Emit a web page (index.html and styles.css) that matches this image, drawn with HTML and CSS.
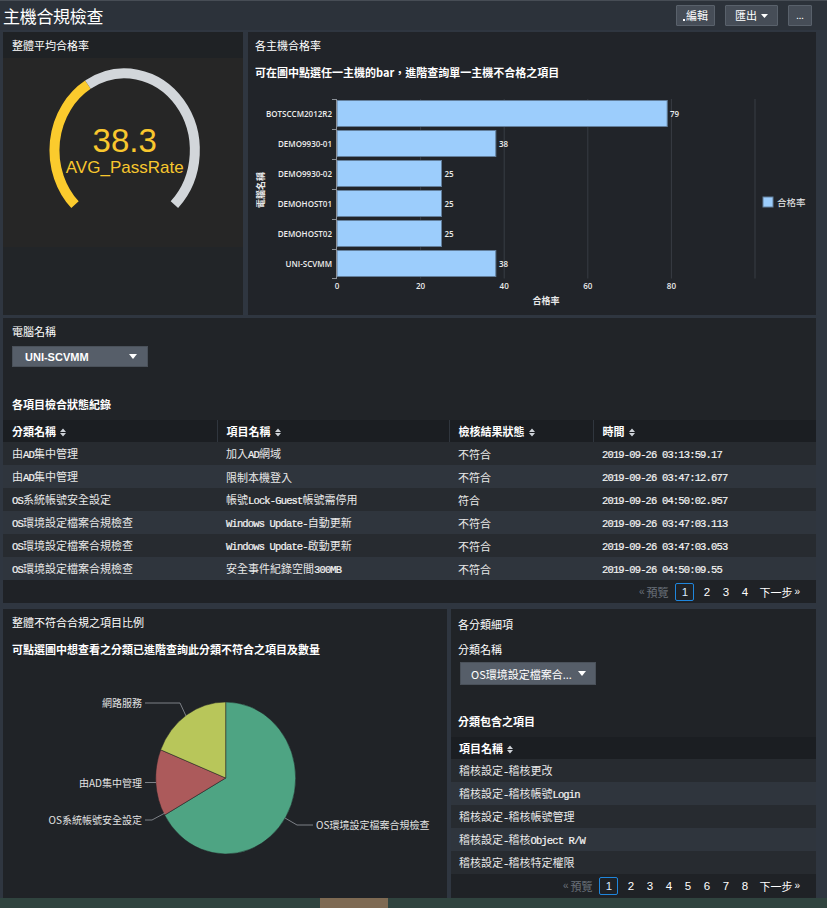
FILE: index.html
```html
<!DOCTYPE html>
<html lang="zh-Hant">
<head>
<meta charset="utf-8">
<title>主機合規檢查</title>
<link rel="stylesheet" href="styles.css">
</head>
<body>
<header class="topbar">
  <h1 class="page-title">主機合規檢查</h1>
  <div class="actions">
    <button class="btn btn-edit"><span class="dot"></span>編輯</button>
    <button class="btn btn-export">匯出<svg class="caret-sm" width="7" height="4" viewBox="0 0 7 4"><path d="M0 0H7L3.5 4Z" fill="#fff"/></svg></button>
    <button class="btn btn-more">...</button>
  </div>
</header>

<main class="dashboard">
  <div class="row-top">
    <section class="panel gauge-panel">
      <div class="gauge-head">整體平均合格率</div>
      <div class="gauge-body">
        <svg class="gauge" width="240" height="189" viewBox="3 58 240 189">
          <path d="M75 204.7 A70.3 77 0 0 1 87.9 84.7" stroke="#fbcb2d" stroke-width="10" fill="none"/>
          <path d="M87.9 84.7 A70.3 77 0 0 1 174.4 204.7" stroke="#d2d6da" stroke-width="10" fill="none"/>
          <text x="124.7" y="151.7" text-anchor="middle" class="g-value">38.3</text>
          <text x="124.7" y="173.3" text-anchor="middle" class="g-label">AVG_PassRate</text>
        </svg>
      </div>
    </section>

    <section class="panel chart-panel">
      <div class="chart-titles">
        <h2 class="panel-title">各主機合格率</h2>
        <p class="panel-sub">可在圖中點選任一主機的bar，進階查詢單一主機不合格之項目</p>
      </div>
      <svg class="bar-chart" width="568" height="236" viewBox="248 79 568 236">
        <g class="grid-lines">
          <line x1="420.6" y1="99" x2="420.6" y2="278.5"/>
          <line x1="504.2" y1="99" x2="504.2" y2="278.5"/>
          <line x1="587.8" y1="99" x2="587.8" y2="278.5"/>
          <line x1="671.4" y1="99" x2="671.4" y2="278.5"/>
          <line x1="755" y1="99" x2="755" y2="278.5"/>
        </g>
        <g class="bars">
          <rect x="337" y="100.5" width="330.2" height="26"/>
          <rect x="337" y="130.5" width="158.8" height="26"/>
          <rect x="337" y="160.5" width="104.5" height="26"/>
          <rect x="337" y="190.5" width="104.5" height="26"/>
          <rect x="337" y="220.5" width="104.5" height="26"/>
          <rect x="337" y="250.5" width="158.8" height="26"/>
        </g>
        <g class="axis">
          <line x1="336.5" y1="99" x2="336.5" y2="279"/>
          <line x1="332" y1="99.5" x2="336.5" y2="99.5"/>
          <line x1="332" y1="129.5" x2="336.5" y2="129.5"/>
          <line x1="332" y1="159.5" x2="336.5" y2="159.5"/>
          <line x1="332" y1="189.5" x2="336.5" y2="189.5"/>
          <line x1="332" y1="219.5" x2="336.5" y2="219.5"/>
          <line x1="332" y1="249.5" x2="336.5" y2="249.5"/>
          <line x1="332" y1="278.5" x2="336.5" y2="278.5"/>
        </g>
        <g class="cat-labels" text-anchor="end">
          <text x="332" y="116.5">BOTSCCM2012R2</text>
          <text x="332" y="146.5">DEMO9930-01</text>
          <text x="332" y="176.5">DEMO9930-02</text>
          <text x="332" y="206.5">DEMOHOST01</text>
          <text x="332" y="236.5">DEMOHOST02</text>
          <text x="332" y="266.5">UNI-SCVMM</text>
        </g>
        <g class="val-labels">
          <text x="670" y="117">79</text>
          <text x="499" y="147">38</text>
          <text x="444.5" y="177">25</text>
          <text x="444.5" y="207">25</text>
          <text x="444.5" y="237">25</text>
          <text x="499" y="267">38</text>
        </g>
        <g class="tick-labels" text-anchor="middle">
          <text x="337" y="289">0</text>
          <text x="420.6" y="289">20</text>
          <text x="504.2" y="289">40</text>
          <text x="587.8" y="289">60</text>
          <text x="671.4" y="289">80</text>
        </g>
        <text class="axis-title" x="546" y="303.5" text-anchor="middle">合格率</text>
        <text class="axis-title" x="0" y="0" text-anchor="middle" transform="translate(264 190) rotate(-90)">電腦名稱</text>
        <rect class="legend-box" x="763" y="197" width="10" height="10"/>
        <text class="legend-text" x="777" y="206">合格率</text>
      </svg>
    </section>
  </div>

  <section class="panel table-panel">
    <div class="field-label">電腦名稱</div>
    <div class="select select-host">
      <span class="select-text">UNI-SCVMM</span>
      <svg class="caret" width="8" height="5" viewBox="0 0 8 5"><path d="M0 0H8L4 5Z" fill="#fff"/></svg>
    </div>
    <h3 class="section-title">各項目檢合狀態紀錄</h3>
    <table class="grid">
      <colgroup>
        <col class="c1"><col class="c2"><col class="c3"><col class="c4">
      </colgroup>
      <thead>
        <tr>
          <th>分類名稱<svg class="sort" width="6" height="9" viewBox="0 0 6 9"><path d="M0 4L3 0.5L6 4Z M0 5L3 8.5L6 5Z"/></svg></th>
          <th>項目名稱<svg class="sort" width="6" height="9" viewBox="0 0 6 9"><path d="M0 4L3 0.5L6 4Z M0 5L3 8.5L6 5Z"/></svg></th>
          <th>檢核結果狀態<svg class="sort" width="6" height="9" viewBox="0 0 6 9"><path d="M0 4L3 0.5L6 4Z M0 5L3 8.5L6 5Z"/></svg></th>
          <th>時間<svg class="sort" width="6" height="9" viewBox="0 0 6 9"><path d="M0 4L3 0.5L6 4Z M0 5L3 8.5L6 5Z"/></svg></th>
        </tr>
      </thead>
      <tbody>
        <tr><td>由<span class="m">AD</span>集中管理</td><td>加入<span class="m">AD</span>網域</td><td>不符合</td><td><span class="m">2019-09-26 03:13:59.17</span></td></tr>
        <tr><td>由<span class="m">AD</span>集中管理</td><td>限制本機登入</td><td>不符合</td><td><span class="m">2019-09-26 03:47:12.677</span></td></tr>
        <tr><td><span class="m">OS</span>系統帳號安全設定</td><td>帳號<span class="m">Lock-Guest</span>帳號需停用</td><td>符合</td><td><span class="m">2019-09-26 04:50:02.957</span></td></tr>
        <tr><td><span class="m">OS</span>環境設定檔案合規檢查</td><td><span class="m">Windows Update-</span>自動更新</td><td>不符合</td><td><span class="m">2019-09-26 03:47:03.113</span></td></tr>
        <tr><td><span class="m">OS</span>環境設定檔案合規檢查</td><td><span class="m">Windows Update-</span>啟動更新</td><td>不符合</td><td><span class="m">2019-09-26 03:47:03.053</span></td></tr>
        <tr><td><span class="m">OS</span>環境設定檔案合規檢查</td><td>安全事件紀錄空間<span class="m">300MB</span></td><td>不符合</td><td><span class="m">2019-09-26 04:50:09.55</span></td></tr>
      </tbody>
    </table>
    <nav class="pager">
      <span class="pg-prev"><span class="arr">«</span>預覽</span>
      <span class="pg active">1</span>
      <span class="pg">2</span>
      <span class="pg">3</span>
      <span class="pg">4</span>
      <span class="pg-next">下一步<span class="arr">»</span></span>
    </nav>
  </section>

  <div class="row-bottom">
    <section class="panel pie-panel">
      <div class="pie-titles">
        <h2 class="panel-title">整體不符合合規之項目比例</h2>
        <p class="panel-sub">可點選圖中想查看之分類已進階查詢此分類不符合之項目及數量</p>
      </div>
      <svg class="pie" width="444" height="238" viewBox="3 660 444 238">
        <path class="s-green" d="M225.7 778 L225.7 702 A70 76 0 1 1 164.6 815.1 Z"/>
        <path class="s-red" d="M225.7 778 L164.6 815.1 A70 76 0 0 1 160.7 749.8 Z"/>
        <path class="s-yellow" d="M225.7 778 L160.7 749.8 A70 76 0 0 1 225.7 702 Z"/>
        <g class="leaders">
          <polyline points="145,703 180,703 186,716"/>
          <polyline points="145,782.5 156,782.5"/>
          <polyline points="145,820 152,820 165,813"/>
          <polyline points="285,818 297,825 313,825"/>
        </g>
        <g class="pie-labels">
          <text x="142" y="707" text-anchor="end">網路服務</text>
          <text x="142" y="786.5" text-anchor="end">由AD集中管理</text>
          <text x="142" y="824" text-anchor="end">OS系統帳號安全設定</text>
          <text x="316" y="829">OS環境設定檔案合規檢查</text>
        </g>
      </svg>
    </section>

    <section class="panel detail-panel">
      <h2 class="detail-title">各分類細項</h2>
      <div class="field-label detail-label">分類名稱</div>
      <div class="select select-cat">
        <span class="select-text">OS環境設定檔案合...</span>
        <svg class="caret" width="8" height="5" viewBox="0 0 8 5"><path d="M0 0H8L4 5Z" fill="#fff"/></svg>
      </div>
      <h3 class="section-title detail-sec">分類包含之項目</h3>
      <table class="grid grid-detail">
        <thead>
          <tr><th>項目名稱<svg class="sort" width="6" height="9" viewBox="0 0 6 9"><path d="M0 4L3 0.5L6 4Z M0 5L3 8.5L6 5Z"/></svg></th></tr>
        </thead>
        <tbody>
          <tr><td>稽核設定<span class="m">-</span>稽核更改</td></tr>
          <tr><td>稽核設定<span class="m">-</span>稽核帳號<span class="m">Login</span></td></tr>
          <tr><td>稽核設定<span class="m">-</span>稽核帳號管理</td></tr>
          <tr><td>稽核設定<span class="m">-</span>稽核<span class="m">Object R/W</span></td></tr>
          <tr><td>稽核設定<span class="m">-</span>稽核特定權限</td></tr>
        </tbody>
      </table>
      <nav class="pager">
        <span class="pg-prev"><span class="arr">«</span>預覽</span>
        <span class="pg active">1</span>
        <span class="pg">2</span>
        <span class="pg">3</span>
        <span class="pg">4</span>
        <span class="pg">5</span>
        <span class="pg">6</span>
        <span class="pg">7</span>
        <span class="pg">8</span>
        <span class="pg-next">下一步<span class="arr">»</span></span>
      </nav>
    </section>
  </div>
</main>

<div class="footer-strip"><span class="strip-block"></span></div>
</body>
</html>
```

FILE: styles.css
```css
* {
  box-sizing: border-box;
  margin: 0;
  padding: 0;
}

html, body {
  width: 827px;
  height: 908px;
  overflow: hidden;
}

body {
  background: #2f3640;
  font-family: "Noto Sans CJK TC", "Noto Sans", sans-serif;
  font-size: 11px;
  color: #e8e8e8;
}

/* ---------- top bar ---------- */
.topbar {
  height: 30px;
  background: #2c323a;
  border-top: 1px solid #474d55;
  display: flex;
  align-items: center;
  justify-content: space-between;
  padding: 0 15px 0 3px;
}

.page-title {
  font-size: 17px;
  font-weight: normal;
  line-height: 20px;
  color: #ffffff;
  letter-spacing: -0.3px;
}

.actions {
  display: flex;
  gap: 10px;
}

.btn {
  height: 21px;
  background: #464d57;
  border: 1px solid #59616b;
  border-radius: 1px;
  color: #ffffff;
  font-family: inherit;
  font-size: 11px;
  line-height: 19px;
  display: flex;
  align-items: center;
  justify-content: center;
  gap: 4px;
}

.btn-edit { width: 39px; gap: 1px; }
.btn-export { width: 53px; }
.btn-more { width: 24px; font-size: 9px; }

.dot {
  width: 2px;
  height: 2px;
  background: #ffffff;
  align-self: flex-end;
  margin-bottom: 4px;
}

/* ---------- layout ---------- */
.dashboard {
  padding: 2px 11px 0 3px;
  display: flex;
  flex-direction: column;
}

.row-top {
  display: grid;
  grid-template-columns: 240px 568px;
  gap: 5px;
  height: 283px;
}

.row-bottom {
  display: grid;
  grid-template-columns: 444px 365px;
  gap: 4px;
  height: 289px;
  margin-top: 6px;
}

.panel {
  background: #212428;
  overflow: hidden;
}

/* ---------- gauge ---------- */
.gauge-panel {
  background: #222528;
}

.gauge-head {
  height: 26px;
  line-height: 26px;
  padding-left: 9px;
  background: #1f2225;
  color: #ffffff;
}

.gauge-body {
  height: 189px;
  background: #262626;
}

.gauge {
  display: block;
}

.g-value {
  font-family: "Liberation Sans", Arial, sans-serif;
  font-size: 33px;
  fill: #f8c72e;
}

.g-label {
  font-family: "Liberation Sans", Arial, sans-serif;
  font-size: 17px;
  fill: #f8c72e;
}

/* ---------- bar chart ---------- */
.chart-panel {
  background: #212429;
}

.chart-titles {
  height: 47px;
  padding: 6px 7px 0;
}

.panel-title {
  font-size: 11px;
  font-weight: normal;
  line-height: 14px;
  color: #ffffff;
}

.panel-sub {
  margin-top: 13px;
  font-size: 11px;
  font-weight: bold;
  line-height: 14px;
  color: #ffffff;
}

.bar-chart {
  display: block;
  font-family: "Open Sans", "Noto Sans CJK TC", sans-serif;
}

.grid-lines line {
  stroke: #383d44;
  stroke-width: 1;
}

.bars rect {
  fill: #9ccdfc;
  stroke: #637f9c;
  stroke-width: 1;
}

.axis line {
  stroke: #8b9097;
  stroke-width: 1;
}

.cat-labels text,
.val-labels text,
.tick-labels text {
  font-size: 8px;
  font-weight: 600;
  fill: #ececec;
}

.axis-title {
  font-family: "Noto Sans CJK TC", sans-serif;
  font-size: 9px;
  font-weight: bold;
  fill: #e8e8e8;
}

.legend-box {
  fill: #9ccdfc;
  stroke: #637f9c;
}

.legend-text {
  font-family: "Noto Sans CJK TC", sans-serif;
  font-size: 9.5px;
  fill: #e8e8e8;
}

/* ---------- table panel ---------- */
.table-panel {
  margin-top: 3px;
  height: 285px;
  background: #212428;
}

.field-label {
  padding: 6px 0 0 9px;
  line-height: 14px;
  color: #ffffff;
}

.select {
  margin: 8px 0 0 9px;
  width: 136px;
  height: 21px;
  background: #565e69;
  border: 1px solid #4a515a;
  display: flex;
  align-items: center;
  justify-content: space-between;
  padding: 0 10px 0 12px;
  color: #ffffff;
}

.select-host .select-text {
  font-family: "Liberation Sans", Arial, sans-serif;
  font-weight: bold;
  font-size: 11px;
}

.section-title {
  margin: 30px 0 0 9px;
  font-size: 11px;
  font-weight: bold;
  line-height: 14px;
  color: #ffffff;
}

.grid {
  margin-top: 9px;
  width: 100%;
  border-collapse: collapse;
  table-layout: fixed;
}

.grid .c1 { width: 214px; }
.grid .c2 { width: 232px; }
.grid .c3 { width: 144px; }
.grid .c4 { width: 223px; }

.grid th {
  height: 22px;
  padding: 0 8px 0 9px;
  background: #1b1e22;
  text-align: left;
  font-weight: bold;
  font-size: 11px;
  line-height: 14px;
  color: #ffffff;
  white-space: nowrap;
}

.grid th + th {
  border-left: 1px solid #30363e;
}

.sort {
  margin-left: 4px;
  vertical-align: -1px;
  fill: #cfd3d8;
}

.grid td {
  height: 23px;
  padding: 0 8px 0 9px;
  line-height: 14px;
  color: #e8e8e8;
  white-space: nowrap;
  overflow: hidden;
  vertical-align: middle;
}

.grid tbody tr:nth-child(odd) td { background: #272b30; }
.grid tbody tr:nth-child(even) td { background: #2f353d; }

.m {
  font-family: "Liberation Mono", "DejaVu Sans Mono", monospace;
  font-size: 10.5px;
  line-height: 1;
  letter-spacing: -0.85px;
  color: #f4f4f4;
  -webkit-text-stroke: 0.2px #f4f4f4;
}

/* ---------- pager ---------- */
.pager {
  height: 23px;
  background: #1f2226;
  display: flex;
  align-items: center;
  justify-content: flex-end;
  padding-right: 16px;
  color: #ffffff;
  font-size: 11px;
  line-height: 14px;
}

.pg-prev {
  color: #6b727b;
  margin-right: 7px;
  display: flex;
  align-items: center;
  gap: 2px;
}

.arr {
  font-family: "Liberation Sans", sans-serif;
  font-size: 10px;
}

.pg {
  width: 19px;
  text-align: center;
  font-family: "Liberation Sans", Arial, sans-serif;
  font-size: 11.5px;
}

.pg.active {
  height: 18px;
  line-height: 16px;
  border: 1px solid #1f86dc;
  border-radius: 2px;
  margin-right: 3px;
  color: #d9ecff;
}

.pg-next {
  margin-left: 5px;
  display: flex;
  align-items: center;
  gap: 2px;
}

/* ---------- pie ---------- */
.pie-panel {
  background: #202327;
}

.pie-titles {
  height: 51px;
  padding: 6px 9px 0;
}

.pie {
  display: block;
}

.s-green { fill: #4ea483; stroke: #202327; stroke-width: 0.5; }
.s-red { fill: #ac5a5b; stroke: #202327; stroke-width: 0.5; }
.s-yellow { fill: #b8c65a; stroke: #202327; stroke-width: 0.5; }

.leaders polyline {
  fill: none;
  stroke: #7d8187;
  stroke-width: 1;
}

.pie-labels text {
  font-family: "Noto Sans CJK TC", sans-serif;
  font-size: 10px;
  fill: #e2e2e2;
}

/* ---------- detail ---------- */
.detail-panel {
  background: #202327;
}

.detail-title {
  padding: 8px 0 0 7px;
  font-size: 11px;
  font-weight: normal;
  line-height: 14px;
  color: #ffffff;
}

.detail-label {
  padding: 11px 0 0 7px;
}

.select-cat {
  margin: 6px 0 0 9px;
  height: 23px;
  padding: 0 9px 0 10px;
}

.detail-sec {
  margin: 29px 0 0 7px;
}

.grid-detail th,
.grid-detail td {
  padding-left: 8px;
}

/* ---------- footer strip ---------- */
.footer-strip {
  height: 10px;
  background: #30443f;
  display: flex;
  padding-left: 320px;
}

.strip-block {
  width: 68px;
  height: 10px;
  background: #7e6a53;
}
```
